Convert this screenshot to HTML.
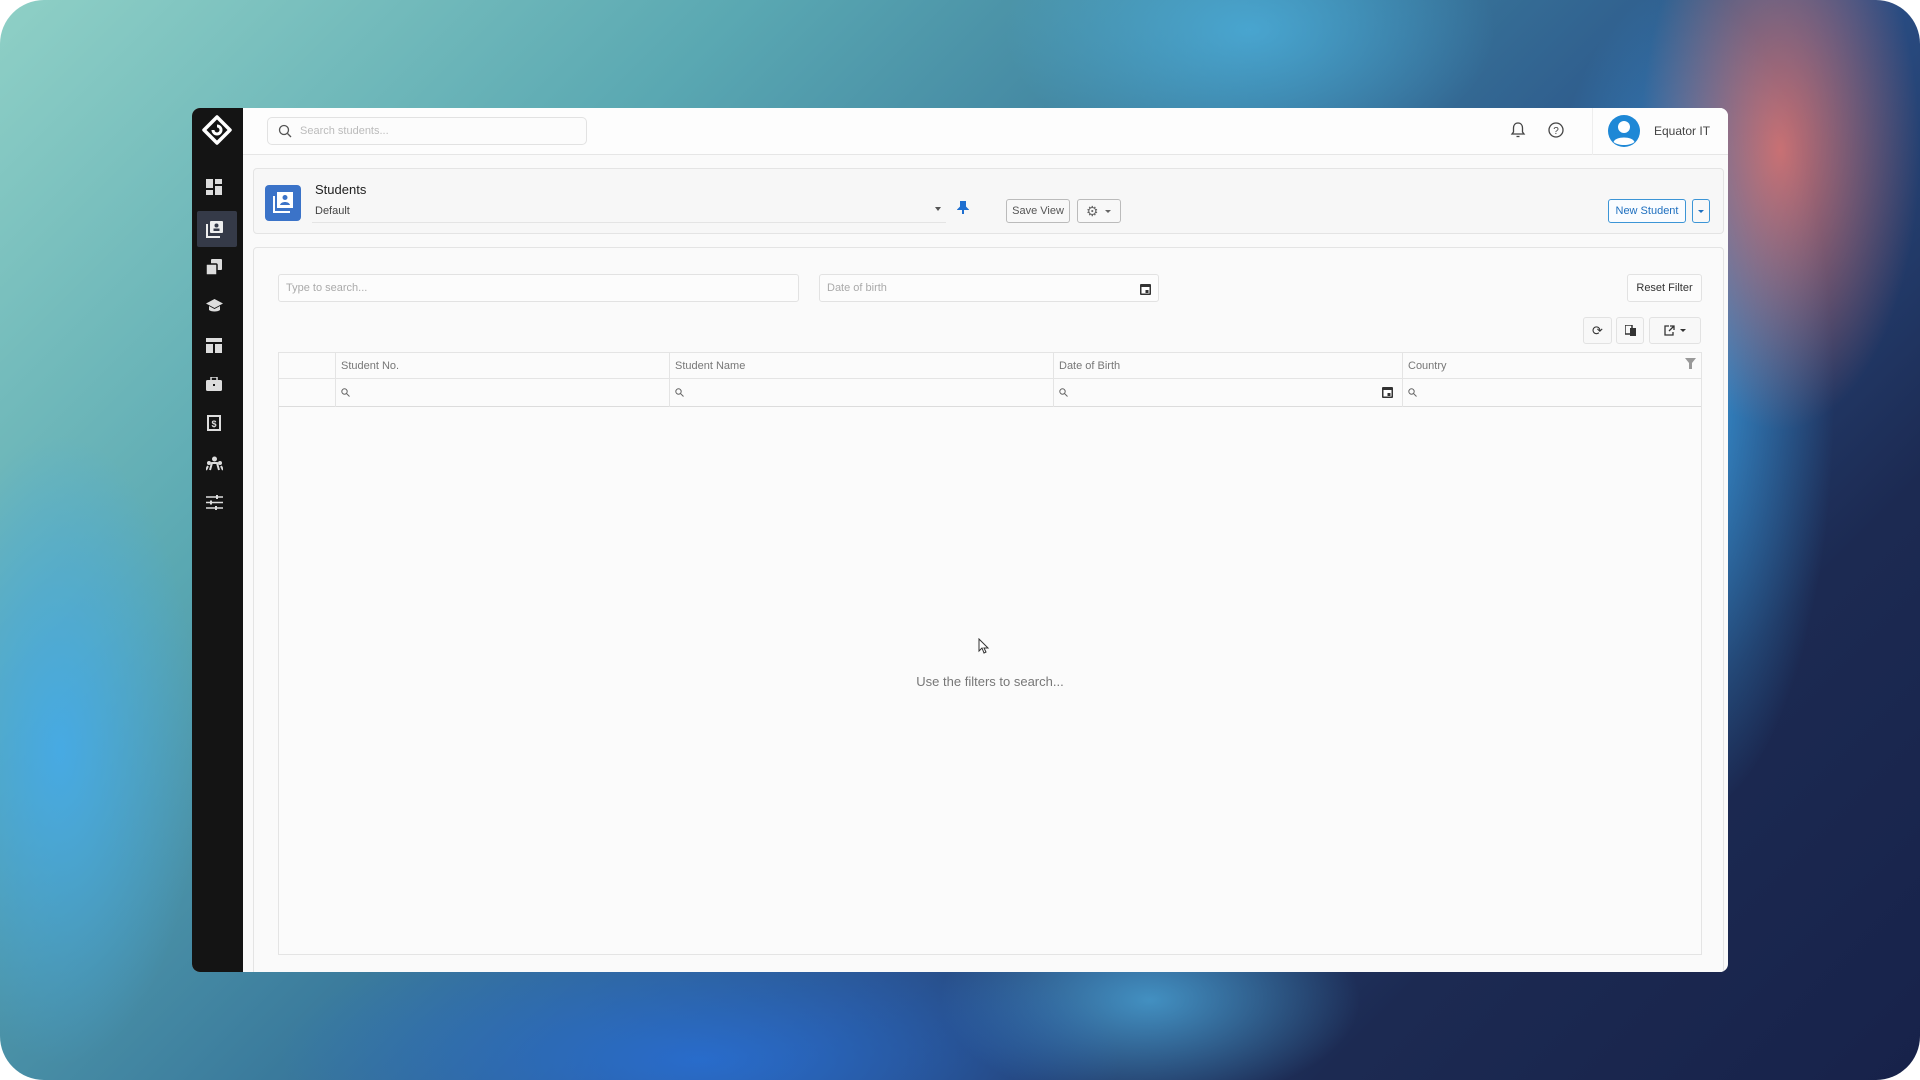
<!DOCTYPE html>
<html><head><meta charset="utf-8"><style>
*{box-sizing:border-box;margin:0;padding:0}
body{width:1920px;height:1080px;background:#fff;font-family:"Liberation Sans",sans-serif;overflow:hidden;position:relative}
.bg{position:absolute;inset:0;border-radius:44px;overflow:hidden;
background:
radial-gradient(ellipse 200px 400px at 1780px 150px,rgba(240,120,110,.8),transparent 70%),
radial-gradient(ellipse 220px 600px at 1680px 400px,rgba(60,170,240,.85),transparent 70%),
radial-gradient(ellipse 350px 200px at 1250px 30px,rgba(80,190,240,.6),transparent 70%),
radial-gradient(ellipse 200px 450px at 60px 750px,rgba(70,170,230,.95),transparent 70%),
radial-gradient(ellipse 600px 200px at 700px 1060px,rgba(40,110,210,.9),transparent 70%),
radial-gradient(ellipse 300px 150px at 1150px 1000px,rgba(80,180,230,.7),transparent 70%),
linear-gradient(135deg,#8fd0c6 0%,#5aa8b2 25%,#3a7a9c 45%,#2a4f86 62%,#1c2a52 80%,#17224a 100%);}
.win{position:absolute;left:192px;top:108px;width:1536px;height:864px;background:#fafafa;border-radius:8px;overflow:hidden}
.side{position:absolute;left:0;top:0;width:51px;height:100%;background:#141414}
.side .ic{position:absolute;left:11px;width:22px;height:22px;display:flex;align-items:center;justify-content:center}
.top{position:absolute;left:51px;top:0;right:0;height:47px;background:#fdfdfd;border-bottom:1px solid #e6e6e6}
.card{position:absolute;background:#f7f7f7;border:1px solid #e4e4e4;border-radius:4px}
.btn{position:absolute;border:1px solid #bbb;border-radius:3px;background:#f8f8f8;font-size:11px;color:#555;display:flex;align-items:center;justify-content:center;white-space:nowrap}
.inp{position:absolute;border:1px solid #e2e2e2;background:#fcfcfc;border-radius:3px;font-size:11px;color:#aaa;padding-left:7px;display:flex;align-items:center}
.th{position:absolute;font-size:11px;color:#777}
.vl{position:absolute;top:0;width:1px;height:54px;background:#e4e4e4}
</style></head><body>
<div class="bg"></div>
<div class="win">
 <div class="side">
  <svg style="position:absolute;left:9px;top:6px" width="32" height="32" viewBox="0 0 32 32"><path d="M16 3 L29 16 L16 29 L3 16 Z" fill="none" stroke="#fff" stroke-width="3.5" stroke-linejoin="round"/><path d="M12 16a4 4 0 1 0 4-4" fill="none" stroke="#fff" stroke-width="3"/></svg>
  <div style="position:absolute;left:5px;top:103px;width:40px;height:36px;background:#353a48;border-radius:2px"></div>
  <div class="ic" style="top:68px"><svg width="16" height="16"><rect x="0" y="0" width="7" height="9" fill="#ddd"/><rect x="9" y="0" width="7" height="5" fill="#ddd"/><rect x="0" y="11" width="7" height="5" fill="#ddd"/><rect x="9" y="7" width="7" height="9" fill="#ddd"/></svg></div>
  <div class="ic" style="top:110px"><svg width="17" height="17"><rect x="4" y="0" width="13" height="12" rx="1" fill="#eee"/><circle cx="10.5" cy="4.5" r="2" fill="#353a48"/><rect x="7.5" y="7.5" width="6" height="2.5" fill="#353a48"/><path d="M1 3v13h13" stroke="#eee" stroke-width="2" fill="none"/></svg></div>
  <div class="ic" style="top:148px"><svg width="16" height="16"><rect x="5" y="0" width="11" height="11" rx="1" fill="#ddd"/><rect x="0" y="5" width="11" height="11" rx="1" fill="#ddd" stroke="#141414" stroke-width="1.5"/></svg></div>
  <div class="ic" style="top:187px"><svg width="17" height="14"><path d="M8.5 0 L17 4.5 L8.5 9 L0 4.5Z" fill="#ddd"/><path d="M3 7v4c2 2 9 2 11 0V7l-5.5 3z" fill="#ddd"/></svg></div>
  <div class="ic" style="top:226px"><svg width="16" height="15"><rect width="16" height="4" fill="#ddd"/><rect y="6" width="7" height="9" fill="#ddd"/><rect x="9" y="6" width="7" height="9" fill="#ddd"/></svg></div>
  <div class="ic" style="top:265px"><svg width="16" height="14"><rect y="3" width="16" height="11" rx="1.5" fill="#ddd"/><rect x="5" y="0" width="6" height="4" fill="none" stroke="#ddd" stroke-width="1.5"/><rect x="7" y="7" width="2" height="2" fill="#141414"/></svg></div>
  <div class="ic" style="top:304px"><svg width="14" height="16"><rect x="1" y="1" width="12" height="14" fill="none" stroke="#ddd" stroke-width="2"/><text x="7" y="12" font-size="9" fill="#ddd" text-anchor="middle" font-family="Liberation Sans" font-weight="bold">$</text></svg></div>
  <div class="ic" style="top:344px"><svg width="17" height="15"><circle cx="8.5" cy="3" r="2.5" fill="#ddd"/><circle cx="3" cy="7" r="2" fill="#ddd"/><circle cx="14" cy="7" r="2" fill="#ddd"/><path d="M4 14l2-7h5l2 7M0 14l2-4M17 14l-2-4" stroke="#ddd" stroke-width="2" fill="none"/></svg></div>
  <div class="ic" style="top:383px"><svg width="17" height="15"><path d="M0 2h17M0 7.5h17M0 13h17" stroke="#ddd" stroke-width="1.6"/><rect x="10" y="0" width="2" height="4" fill="#ddd"/><rect x="4" y="5.5" width="2" height="4" fill="#ddd"/><rect x="9" y="11" width="2" height="4" fill="#ddd"/></svg></div>
 </div>
 <div class="top">
  <div class="inp" style="left:24px;top:9px;width:320px;height:28px;border-radius:5px;padding-left:10px;color:#bbb"><svg width="14" height="14" style="margin-right:8px"><circle cx="6" cy="6" r="4.5" fill="none" stroke="#555" stroke-width="1.3"/><path d="M9.5 9.5L13 13" stroke="#555" stroke-width="1.3"/></svg>Search students...</div>
  <svg style="position:absolute;left:1267px;top:13px" width="16" height="18"><path d="M8 2c-3 0-4.5 2.3-4.5 5v4L2 13h12l-1.5-2V7C12.5 4.3 11 2 8 2z" fill="none" stroke="#444" stroke-width="1.3"/><path d="M6.5 15.5h3" stroke="#444" stroke-width="1.3"/></svg>
  <svg style="position:absolute;left:1304px;top:13px" width="18" height="18"><circle cx="9" cy="9" r="7" fill="none" stroke="#444" stroke-width="1.3"/><text x="9" y="13" font-size="10" text-anchor="middle" fill="#444" font-family="Liberation Sans">?</text></svg>
  <div style="position:absolute;left:1349px;top:0;width:1px;height:47px;background:#eee"></div>
  <svg style="position:absolute;left:1364px;top:6px" width="34" height="34"><circle cx="17" cy="17" r="16" fill="#1e88d6"/><circle cx="17" cy="13" r="6" fill="#fff"/><path d="M6.5 28c2-6 19-6 21 0c-5 4-16 4-21 0z" fill="#fff"/></svg>
  <div style="position:absolute;left:1411px;top:16px;font-size:12px;color:#444">Equator IT</div>
 </div>
 <div class="card" style="left:61px;top:60px;width:1471px;height:66px">
  <svg style="position:absolute;left:11px;top:16px" width="36" height="36"><rect width="36" height="36" rx="4" fill="#3b73c8"/><rect x="12" y="7" width="16" height="16" fill="#fff"/><circle cx="20" cy="12.5" r="2.5" fill="#3b73c8"/><path d="M15 20c1-4 9-4 10 0z" fill="#3b73c8"/><path d="M9 11v16h16" stroke="#fff" stroke-width="2" fill="none"/></svg>
  <div style="position:absolute;left:61px;top:13px;font-size:13px;color:#222">Students</div>
  <div style="position:absolute;left:61px;top:36px;font-size:11px;color:#444">Default</div>
  <div style="position:absolute;left:58px;top:53px;width:634px;height:1px;background:#e4e4e4"></div>
  <div style="position:absolute;left:681px;top:38px;border:3.5px solid transparent;border-top:4px solid #555"></div>
  <svg style="position:absolute;left:703px;top:32px" width="12" height="14"><path d="M3 1h6M4 1v5L2 8h8L8 6V1M6 8v5" stroke="#1e6fd0" stroke-width="2" fill="#1e6fd0"/></svg>
  <div class="btn" style="left:752px;top:30px;width:64px;height:24px">Save View</div>
  <div class="btn" style="left:823px;top:30px;width:44px;height:24px;justify-content:flex-start;padding-left:8px"><span style="font-size:14px;color:#666">⚙</span><span style="margin-left:6px;border:3px solid transparent;border-top:3.5px solid #666;margin-top:3px"></span></div>
  <div class="btn" style="left:1354px;top:30px;width:78px;height:24px;border-color:#3c95d6;color:#1e6fbf;background:#fafcff">New Student</div>
  <div class="btn" style="left:1438px;top:30px;width:18px;height:24px;border-color:#3c95d6"><span style="border:3px solid transparent;border-top:3.5px solid #1e6fbf;margin-top:3px"></span></div>
 </div>
 <div class="card" style="left:61px;top:139px;width:1471px;height:740px;background:#fafafa">
  <div class="inp" style="left:24px;top:26px;width:521px;height:28px">Type to search...</div>
  <div class="inp" style="left:565px;top:26px;width:340px;height:28px">Date of birth<svg style="position:absolute;right:7px;top:8px" width="11" height="12"><rect x="0" y="1" width="11" height="11" rx="1" fill="#333"/><rect x="1.5" y="4" width="8" height="6.5" fill="#fff"/><rect x="5.5" y="7" width="3" height="3" fill="#333"/></svg></div>
  <div class="btn" style="left:1373px;top:26px;width:75px;height:28px;border-color:#e2e2e2;color:#333;background:#fcfcfc">Reset Filter</div>
  <div class="btn" style="left:1329px;top:69px;width:29px;height:27px;border-color:#e2e2e2;font-size:13px;color:#333">⟳</div>
  <div class="btn" style="left:1362px;top:69px;width:28px;height:27px;border-color:#e2e2e2"><svg width="11" height="11"><rect x="0" y="0" width="7" height="9" fill="none" stroke="#333" stroke-width="1.5"/><rect x="5" y="3" width="6" height="8" fill="#333"/></svg></div>
  <div class="btn" style="left:1395px;top:69px;width:52px;height:27px;border-color:#e2e2e2"><svg width="11" height="11"><path d="M5 1H1v9h8V7M6 1h4v4M10 1L5 6" stroke="#333" stroke-width="1.3" fill="none"/></svg><span style="margin-left:5px;border:3px solid transparent;border-top:3.5px solid #333;margin-top:3px"></span></div>
  <div style="position:absolute;left:24px;top:104px;width:1424px;height:603px;border:1px solid #e4e4e4;background:#fbfbfb">
   <div style="position:absolute;left:0;top:0;right:0;height:54px;border-bottom:1px solid #dcdcdc"></div>
   <div style="position:absolute;left:0;top:25px;right:0;height:1px;background:#e4e4e4"></div>
   <div class="vl" style="left:56px"></div>
   <div class="vl" style="left:390px"></div>
   <div class="vl" style="left:774px"></div>
   <div class="vl" style="left:1123px"></div>
   <div class="th" style="left:62px;top:7px">Student No.</div>
   <div class="th" style="left:396px;top:7px">Student Name</div>
   <div class="th" style="left:780px;top:7px">Date of Birth</div>
   <div class="th" style="left:1129px;top:7px">Country</div>
   <svg style="position:absolute;left:1406px;top:5px" width="11" height="11"><path d="M0 0h11L7 5v6H4V5z" fill="#999"/></svg>
   <svg style="position:absolute;left:62px;top:35px" width="9" height="9"><circle cx="3.5" cy="3.5" r="2.7" fill="none" stroke="#666"/><path d="M5.5 5.5L8.5 8.5" stroke="#666"/></svg>
   <svg style="position:absolute;left:396px;top:35px" width="9" height="9"><circle cx="3.5" cy="3.5" r="2.7" fill="none" stroke="#666"/><path d="M5.5 5.5L8.5 8.5" stroke="#666"/></svg>
   <svg style="position:absolute;left:780px;top:35px" width="9" height="9"><circle cx="3.5" cy="3.5" r="2.7" fill="none" stroke="#666"/><path d="M5.5 5.5L8.5 8.5" stroke="#666"/></svg>
   <svg style="position:absolute;left:1129px;top:35px" width="9" height="9"><circle cx="3.5" cy="3.5" r="2.7" fill="none" stroke="#666"/><path d="M5.5 5.5L8.5 8.5" stroke="#666"/></svg>
   <svg style="position:absolute;left:1103px;top:33px" width="11" height="12"><rect x="0" y="1" width="11" height="11" rx="1" fill="#333"/><rect x="1.5" y="4" width="8" height="6.5" fill="#fff"/><rect x="5.5" y="7" width="3" height="3" fill="#333"/></svg>
   <div style="position:absolute;left:0;right:0;top:321px;text-align:center;font-size:13px;color:#777">Use the filters to search...</div>
   <svg style="position:absolute;left:699px;top:285px" width="12" height="16"><path d="M1 1v12l3-3 2 5 2-1-2-4h4z" fill="#fff" stroke="#333" stroke-width="1"/></svg>
  </div>
  <div style="position:absolute;left:32px;top:724px;width:10px;height:6px;background:#3b73c8"></div>
 </div>
</div>
</body></html>
